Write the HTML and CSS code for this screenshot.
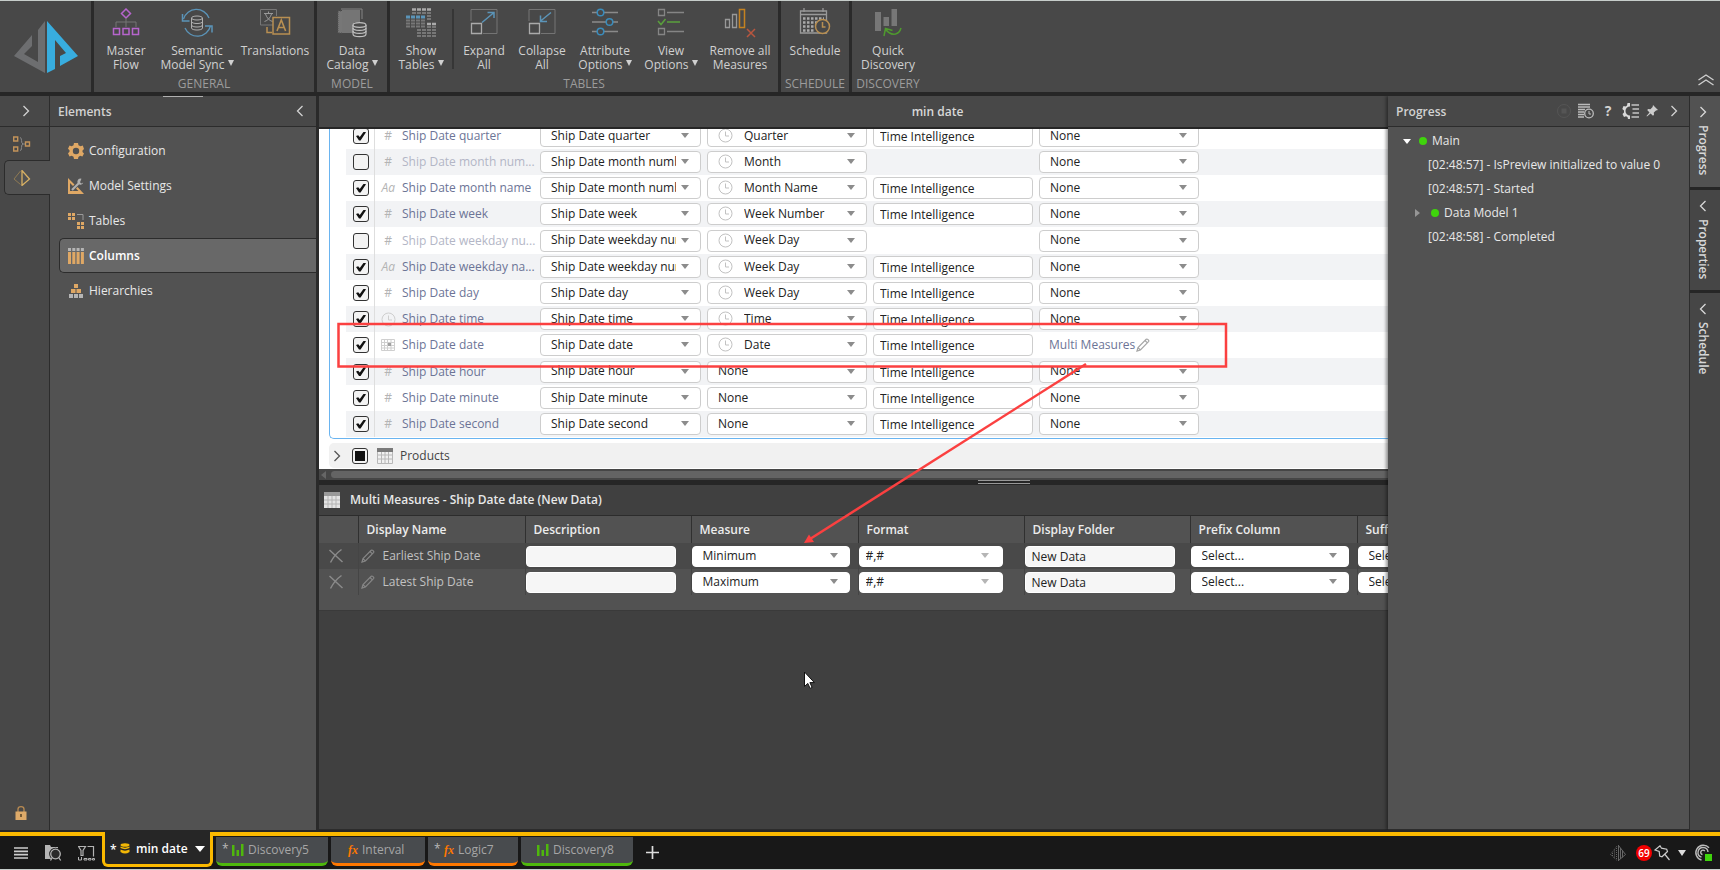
FILE: index.html
```html
<!DOCTYPE html>
<html lang="en">
<head>
<meta charset="utf-8">
<title>min date</title>
<link rel="stylesheet" href="styles.css">
</head>
<body>
<svg class="defs" aria-hidden="true">
  <symbol id="clock" viewBox="0 0 15 15"><circle cx="7.5" cy="7.5" r="6.5" fill="none" stroke="currentColor"/><path d="M7.5 3.5v4.5h3.5" fill="none" stroke="currentColor"/></symbol>
  <symbol id="pencil" viewBox="0 0 14 14"><path d="M1 13l1-3.500L10.200 1.300q.8-.6 1.500.1l.8.8q.6.7 0 1.400L4.400 12zM9 2.500l2.400 2.400M2 9.700l2.300 2.300" fill="none" stroke="currentColor" stroke-width="1.200"/></symbol>
  <symbol id="left" viewBox="0 0 8 12"><path d="M6.500 1L1.500 6l5 5" fill="none" stroke="currentColor" stroke-width="1.300"/></symbol>
  <symbol id="right" viewBox="0 0 8 12"><path d="M1.500 1l5 5-5 5" fill="none" stroke="currentColor" stroke-width="1.300"/></symbol>
  <symbol id="calendar" viewBox="0 0 14 12"><path d="M.5 .5h13v11H.5zM.5 3.500h13M.5 6.500h13M.5 9h13M3.500 .5v11M6.500 .5v11M10 .5v11" fill="none" stroke="currentColor"/><path d="M7 4h3v3H7z" fill="#a0a0a0"/></symbol>
  <symbol id="grid" viewBox="0 0 16 16"><path d="M.5 2h15v13.500H.5zM.5 7h15M.5 11h15M4.500 4v11.500M8 4v11.500M11.500 4v11.500" fill="none" stroke="currentColor"/><path d="M0 0h16v4H0z" fill="#7a7a7a"/></symbol>
  <symbol id="cross" viewBox="0 0 16 16"><path d="M1.500 2l13 12M13.500 1.500q-7 5-11 13" fill="none" stroke="currentColor" stroke-width="1.500"/></symbol>
  <symbol id="bars" viewBox="0 0 12 12"><path d="M0 1h2.500v11H0zM4.500 6H7v6H4.500zM9 0h2.500v12H9z" fill="#4fb80c"/></symbol>
</svg>

<header class="ribbon">
  <div class="logo">
    <svg width="64" height="52" viewBox="0 0 64 52" role="img" aria-label="Pyramid"><path d="M31 0v52L0 35l18-21v11L10 33l14 8V9z" fill="#6d6e70"/><path d="M33 0l31 35-18 10V35l6-3L41 19v29l-8 4z" fill="#38addf"/></svg>
  </div>
  <section class="group general">
    <div class="tools">
      <button class="tool"><svg width="28" height="30" viewBox="0 0 28 30" fill="none"><path d="M14 1l4.500 4.500L14 10 9.500 5.500z" stroke="#b765cd" stroke-width="1.500"/><path d="M14 10v9M4 19v-5h20v5" stroke="#747474"/><path d="M1.500 20.500h6v6h-6zM11 20.500h6v6h-6zM20.500 20.500h6v6h-6z" stroke="#b765cd" stroke-width="1.500"/></svg><span>Master<br>Flow</span></button>
      <button class="tool"><svg width="32" height="30" viewBox="0 0 32 30" fill="none"><path d="M2.500 11A13.500 13.500 0 0 1 28 10M29.500 18A13.500 13.500 0 0 1 4 20" stroke="#5b94b8" stroke-width="1.300"/><path d="M1.500 6v7h7M24 18h7v6.500" stroke="#5b94b8" stroke-width="1.500"/><g stroke="#b0b0b0"><ellipse cx="16" cy="10" rx="5.500" ry="2"/><path d="M10.500 10v10c0 2.700 11 2.700 11 0V10M10.500 13.500c0 2.700 11 2.700 11 0M10.500 17c0 2.700 11 2.700 11 0"/></g></svg><span>Semantic<br>Model Sync <i class="caret"></i></span></button>
      <button class="tool"><svg width="32" height="30" viewBox="0 0 32 30" fill="none"><path d="M14 17H1.500V1.500h16V8" stroke="#777"/><path d="M5 5.500h9M9.500 3.500v2M6.500 6q2 6 7 7.500M12.500 6q-2 6-7 7.500" stroke="#999"/><path d="M14 9.500h16.500v16.500H14zM8 19v5.500h5" stroke="#b88f52" stroke-width="1.500"/><path d="M18 23l4.300-11L26.600 23M19.500 19.500h5.500" stroke="#b88f52" stroke-width="1.600"/></svg><span>Translations</span></button>
    </div>
    <h2>GENERAL</h2>
  </section>
  <section class="group model">
    <div class="tools">
      <button class="tool"><svg width="32" height="30" viewBox="0 0 32 30"><path d="M2 3h5v22H2z" fill="#777" stroke="#555" stroke-dasharray="1 1"/><path d="M6 2h18v12h-6v11H6z" fill="#757575"/><path d="M5 1h21v10" fill="none" stroke="#858585"/><g fill="#4a4a4a" stroke="#c0c0c0" stroke-width="1.200"><path d="M17 17v9c0 3.500 13 3.500 13 0v-9"/><ellipse cx="23.500" cy="17" rx="6.500" ry="2.300"/><path d="M17 20c0 3.200 13 3.200 13 0M17 23c0 3.200 13 3.200 13 0" fill="none"/></g></svg><span>Data<br>Catalog <i class="caret"></i></span></button>
    </div>
    <h2>MODEL</h2>
  </section>
  <section class="group tables">
    <div class="tools">
      <button class="tool"><svg width="32" height="30" viewBox="0 0 32 30" fill="none"><path d="M7 1.500h20" stroke="#aaa" stroke-width="2.500" stroke-dasharray="4 1"/><path d="M7 5h20M22 8h5M22 11h5" stroke="#777" stroke-width="2" stroke-dasharray="4 1"/><path d="M1 9h19" stroke="#5b94b8" stroke-width="3" stroke-dasharray="4 1"/><path d="M1 12.500h19M1 15.500h19M1 18.500h19M12 22h20M12 25h20M12 28h20M22 19h10" stroke="#777" stroke-width="2" stroke-dasharray="4 1"/><path d="M22 16h10" stroke="#aaa" stroke-width="2.500" stroke-dasharray="4 1"/></svg><span>Show<br>Tables <i class="caret"></i></span></button>
      <span class="divider"></span>
      <button class="tool"><svg width="28" height="30" viewBox="0 0 28 30" fill="none"><path d="M1 13V1.500h26v24H13" stroke="#747474"/><path d="M1.500 15.500h10v10h-10z" stroke="#aaa" stroke-width="1.300"/><path d="M12 14.500L24 4.500M17.500 4.500H24V10" stroke="#5b94b8" stroke-width="1.500"/></svg><span>Expand<br>All</span></button>
      <button class="tool"><svg width="28" height="30" viewBox="0 0 28 30" fill="none"><path d="M1 13V1.500h26v24H13" stroke="#747474"/><path d="M1.500 15.500h10v10h-10z" stroke="#aaa" stroke-width="1.300"/><path d="M23 4.500L12 13.500M12.500 7.500v6h6.500" stroke="#5b94b8" stroke-width="1.500"/></svg><span>Collapse<br>All</span></button>
      <button class="tool"><svg width="28" height="30" viewBox="0 0 28 30" fill="#484848"><path d="M1 4.500h26M1 14h26M1 23.500h26" stroke="#8a8a8a" stroke-width="1.300"/><g stroke="#3b8cbb" stroke-width="1.500"><circle cx="9.500" cy="4.500" r="3.300"/><circle cx="18.500" cy="14" r="3.300"/><circle cx="9.500" cy="23.500" r="3.300"/></g></svg><span>Attribute<br>Options <i class="caret"></i></span></button>
      <button class="tool"><svg width="28" height="30" viewBox="0 0 28 30" fill="none"><path d="M1.500 1.500h6v6h-6zM1.500 20.500h6v6h-6zM10 4.500h17M10 23.500h17" stroke="#858585" stroke-width="1.300"/><path d="M1 13l3 3.500L8.500 11M10 14h13" stroke="#5aa03c" stroke-width="1.500"/></svg><span>View<br>Options <i class="caret"></i></span></button>
      <button class="tool"><svg width="32" height="30" viewBox="0 0 32 30" fill="none"><path d="M1.500 11.500h4v8h-4zM8.500 6.500h4v13h-4z" stroke="#999" stroke-width="1.300"/><path d="M15.500 1.500h5v18h-5z" stroke="#c58220" stroke-width="1.500"/><path d="M23 21l8 8M31 21l-8 8" stroke="#b9563f" stroke-width="1.500"/></svg><span>Remove all<br>Measures</span></button>
    </div>
    <h2>TABLES</h2>
  </section>
  <section class="group schedule">
    <div class="tools">
      <button class="tool"><svg width="32" height="30" viewBox="0 0 32 30" fill="none"><path d="M1.500 3h26v22h-26zM5 0v4M24 0v4M1.500 6.500h26" stroke="#999" stroke-width="1.300"/><path d="M4 10.500h21M4 14.500h14M4 18.500h11M4 22.500h11" stroke="#aaa" stroke-width="2.500" stroke-dasharray="2.500 1.500"/><circle cx="23.500" cy="18.500" r="7" fill="#484848" stroke="#b88f52" stroke-width="1.500"/><path d="M23.500 14v5h3" stroke="#b88f52" stroke-width="1.500"/></svg><span>Schedule</span></button>
    </div>
    <h2>SCHEDULE</h2>
  </section>
  <section class="group discovery">
    <div class="tools">
      <button class="tool"><svg width="28" height="30" viewBox="0 0 28 30" fill="none"><path d="M1 4h6v19H1zM9.500 9H15v9H9.500zM17.500 1H23v17h-5.500z" fill="#777"/><path d="M10 28l1.500-7.500 7 2M11.500 21q4 6 10 5 4-.8 5.500-6" stroke="#4f9a2e" stroke-width="1.500"/></svg><span>Quick<br>Discovery</span></button>
    </div>
    <h2>DISCOVERY</h2>
  </section>
  <button class="collapse" aria-label="Collapse ribbon"><svg width="16" height="12" viewBox="0 0 16 12" fill="none" stroke="#d0d0d0" stroke-width="1.300"><path d="M.5 6L8 1l7.500 5M.5 11L8 6l7.500 5"/></svg></button>
</header>

<div class="work">
  <nav class="rail">
    <button class="rail-top" aria-label="Expand"><svg width="8" height="12"><use href="#right"/></svg></button>
    <button class="rail-btn" aria-label="Flow"><svg width="18" height="16" viewBox="0 0 18 16" fill="none"><path d="M.7 1h4v4h-4zM.7 11h4v4h-4zM12.500 6h4v4h-4z" stroke="#c2935a" stroke-width="1.400"/><path d="M7 1.500q1.500 0 1.500 3t1.500 3.500q-1.500 0-1.500 3.500T7 14.500M10 8h2" stroke="#888"/></svg></button>
    <button class="rail-btn on" aria-label="Model"><svg width="18" height="16" viewBox="0 0 18 16" fill="none"><path d="M7.500 1L1 9l6.500 5.500" stroke="#8f7a52"/><path d="M9 .5v15l7.500-6.500z" stroke="#d8b164" stroke-width="1.300"/></svg></button>
    <svg class="lock" width="12" height="14" viewBox="0 0 12 14"><path d="M3 6V3q0-2.300 3-2.300T9 3v3" fill="none" stroke="#b98b52" stroke-width="1.300"/><path d="M.5 5.500h11V14H.5z" fill="#deaa69"/><path d="M5.300 8h1.400v3H5.300z" fill="#4a3a22"/></svg>
  </nav>

  <aside class="elements">
    <span class="grip"></span>
    <header class="panel-head"><h1>Elements</h1><button aria-label="Collapse"><svg width="8" height="12"><use href="#left"/></svg></button></header>
    <ul>
      <li><a href="#configuration"><svg width="16" height="16" viewBox="0 0 16 16"><path d="M6 0h4l.5 2.200 2 1.100 2.300-.8L16 6l-1.500 1.500v1.500L16 10.500l-1.600 3-2.200-.7-1.800 1.100L10 16H6l-.5-2.200-1.800-1-2.200.7L0 10.200l1.500-1.500V7.200L0 5.800l1.500-3.300 2.200.8 1.800-1.100z" fill="#dfa865"/><circle cx="8" cy="8" r="3.200" fill="#505050"/></svg>Configuration</a></li>
      <li><a href="#settings"><svg width="16" height="16" viewBox="0 0 16 16" fill="none"><path d="M0 0l6.500 6.500-1.500 1.500-3-3V13h8.500L8 10.500 9.500 9l6.500 7H0z" fill="#dfa865"/><path d="M4 12l7.500-7.500" stroke="#b0b0b0" stroke-width="2.200"/><path d="M13.500.8a3 3 0 1 0 1.800 3.800l-2 .9-1.300-1.300z" fill="#b0b0b0"/></svg>Model Settings</a></li>
      <li><a href="#tables"><svg width="16" height="16" viewBox="0 0 16 16"><path d="M0 0h3v3H0zM4 0h3v3H4zM0 4h3v3H0zM4 4h3v3H4zM9 9h3v3H9zM13 9h3v3h-3zM9 13h3v3H9zM13 13h3v3h-3z" fill="#dfa865"/><path d="M9 1.500h6V7" fill="none" stroke="#999"/></svg>Tables</a></li>
      <li><a class="on" href="#columns"><svg width="16" height="16" viewBox="0 0 16 16"><path d="M0 0h3v3H0zM4.300 0h3v3h-3zM8.600 0h3v3h-3zM12.900 0h3v3h-3z" fill="#b5b5b5"/><path d="M0 4h3v12H0zM4.300 4h3v12h-3zM8.600 4h3v12h-3zM12.900 4h3v12h-3z" fill="#dfa865"/></svg>Columns</a></li>
      <li><a href="#hierarchies"><svg width="16" height="16" viewBox="0 0 16 16"><path d="M6 1h4v4H6zM3 6h4.500v4H3zM8.500 6H13v4H8.500z" fill="#dfa865"/><path d="M1 11h4v4H1zM6 11h4v4H6zM11 11h4v4h-4z" fill="#b5b5b5"/></svg>Hierarchies</a></li>
    </ul>
  </aside>

  <main class="stage">
    <h1 class="doc-title">min date</h1>
    <div class="upper">
      <div class="view">
        <div class="dates">
          <table class="cols">
            <colgroup><col class="c-check"><col class="c-type"><col class="c-name"><col class="c-sort"><col class="c-field"><col class="c-field"><col class="c-field"><col></colgroup>
            <tbody>
            <tr><td><input type="checkbox" aria-label="Ship Date quarter" checked></td><td>#</td><td>Ship Date quarter</td><td><label class="pick"><select aria-label="Sort"><option>Ship Date quarter</option></select></label></td><td><label class="pick"><svg width="15" height="15"><use href="#clock"/></svg><select aria-label="Category"><option>Quarter</option></select></label></td><td><input type="text" aria-label="Folder" value="Time Intelligence"></td><td><label class="pick"><select aria-label="Measure"><option>None</option></select></label></td><td></td></tr>
            <tr class="off"><td><input type="checkbox" aria-label="Ship Date month number"></td><td>#</td><td>Ship Date month num...</td><td><label class="pick"><select aria-label="Sort"><option>Ship Date month number</option></select></label></td><td><label class="pick"><svg width="15" height="15"><use href="#clock"/></svg><select aria-label="Category"><option>Month</option></select></label></td><td></td><td><label class="pick"><select aria-label="Measure"><option>None</option></select></label></td><td></td></tr>
            <tr><td><input type="checkbox" aria-label="Ship Date month name" checked></td><td><i>Aa</i></td><td>Ship Date month name</td><td><label class="pick"><select aria-label="Sort"><option>Ship Date month number</option></select></label></td><td><label class="pick"><svg width="15" height="15"><use href="#clock"/></svg><select aria-label="Category"><option>Month Name</option></select></label></td><td><input type="text" aria-label="Folder" value="Time Intelligence"></td><td><label class="pick"><select aria-label="Measure"><option>None</option></select></label></td><td></td></tr>
            <tr><td><input type="checkbox" aria-label="Ship Date week" checked></td><td>#</td><td>Ship Date week</td><td><label class="pick"><select aria-label="Sort"><option>Ship Date week</option></select></label></td><td><label class="pick"><svg width="15" height="15"><use href="#clock"/></svg><select aria-label="Category"><option>Week Number</option></select></label></td><td><input type="text" aria-label="Folder" value="Time Intelligence"></td><td><label class="pick"><select aria-label="Measure"><option>None</option></select></label></td><td></td></tr>
            <tr class="off"><td><input type="checkbox" aria-label="Ship Date weekday number"></td><td>#</td><td>Ship Date weekday nu...</td><td><label class="pick"><select aria-label="Sort"><option>Ship Date weekday number</option></select></label></td><td><label class="pick"><svg width="15" height="15"><use href="#clock"/></svg><select aria-label="Category"><option>Week Day</option></select></label></td><td></td><td><label class="pick"><select aria-label="Measure"><option>None</option></select></label></td><td></td></tr>
            <tr><td><input type="checkbox" aria-label="Ship Date weekday name" checked></td><td><i>Aa</i></td><td>Ship Date weekday na...</td><td><label class="pick"><select aria-label="Sort"><option>Ship Date weekday number</option></select></label></td><td><label class="pick"><svg width="15" height="15"><use href="#clock"/></svg><select aria-label="Category"><option>Week Day</option></select></label></td><td><input type="text" aria-label="Folder" value="Time Intelligence"></td><td><label class="pick"><select aria-label="Measure"><option>None</option></select></label></td><td></td></tr>
            <tr><td><input type="checkbox" aria-label="Ship Date day" checked></td><td>#</td><td>Ship Date day</td><td><label class="pick"><select aria-label="Sort"><option>Ship Date day</option></select></label></td><td><label class="pick"><svg width="15" height="15"><use href="#clock"/></svg><select aria-label="Category"><option>Week Day</option></select></label></td><td><input type="text" aria-label="Folder" value="Time Intelligence"></td><td><label class="pick"><select aria-label="Measure"><option>None</option></select></label></td><td></td></tr>
            <tr><td><input type="checkbox" aria-label="Ship Date time" checked></td><td><svg width="15" height="15"><use href="#clock"/></svg></td><td>Ship Date time</td><td><label class="pick"><select aria-label="Sort"><option>Ship Date time</option></select></label></td><td><label class="pick"><svg width="15" height="15"><use href="#clock"/></svg><select aria-label="Category"><option>Time</option></select></label></td><td><input type="text" aria-label="Folder" value="Time Intelligence"></td><td><label class="pick"><select aria-label="Measure"><option>None</option></select></label></td><td></td></tr>
            <tr><td><input type="checkbox" aria-label="Ship Date date" checked></td><td><svg width="14" height="12"><use href="#calendar"/></svg></td><td>Ship Date date</td><td><label class="pick"><select aria-label="Sort"><option>Ship Date date</option></select></label></td><td><label class="pick"><svg width="15" height="15"><use href="#clock"/></svg><select aria-label="Category"><option>Date</option></select></label></td><td><input type="text" aria-label="Folder" value="Time Intelligence"></td><td><a class="multi" href="#multi">Multi Measures<svg width="14" height="14"><use href="#pencil"/></svg></a></td><td></td></tr>
            <tr><td><input type="checkbox" aria-label="Ship Date hour" checked></td><td>#</td><td>Ship Date hour</td><td><label class="pick"><select aria-label="Sort"><option>Ship Date hour</option></select></label></td><td><label class="pick"><select aria-label="Category"><option>None</option></select></label></td><td><input type="text" aria-label="Folder" value="Time Intelligence"></td><td><label class="pick"><select aria-label="Measure"><option>None</option></select></label></td><td></td></tr>
            <tr><td><input type="checkbox" aria-label="Ship Date minute" checked></td><td>#</td><td>Ship Date minute</td><td><label class="pick"><select aria-label="Sort"><option>Ship Date minute</option></select></label></td><td><label class="pick"><select aria-label="Category"><option>None</option></select></label></td><td><input type="text" aria-label="Folder" value="Time Intelligence"></td><td><label class="pick"><select aria-label="Measure"><option>None</option></select></label></td><td></td></tr>
            <tr><td><input type="checkbox" aria-label="Ship Date second" checked></td><td>#</td><td>Ship Date second</td><td><label class="pick"><select aria-label="Sort"><option>Ship Date second</option></select></label></td><td><label class="pick"><select aria-label="Category"><option>None</option></select></label></td><td><input type="text" aria-label="Folder" value="Time Intelligence"></td><td><label class="pick"><select aria-label="Measure"><option>None</option></select></label></td><td></td></tr>
            </tbody>
          </table>
        </div>
        <div class="products"><svg width="8" height="12"><use href="#right"/></svg><input type="checkbox" class="partial" id="products"><svg width="16" height="16"><use href="#grid"/></svg><label for="products">Products</label></div>
      </div>
      <div class="hscroll"><span class="back"></span><span class="thumb"></span></div>
    </div>

    <section class="lower" id="multi">
      <div class="splitter"><span></span></div>
      <h2 class="lower-title"><svg width="16" height="16" viewBox="0 0 16 16"><path d="M0 0h16v16H0z" fill="#e4e4e4"/><path d="M0 0h16v4H0z" fill="#9a9a9a"/><path d="M0 8h16M0 12h16M4 4v12M8 4v12M12 4v12" stroke="#b4b4b4"/></svg>Multi Measures - Ship Date date (New Data)</h2>
      <div class="sheet">
        <table class="measures">
          <colgroup><col class="m-del"><col class="m-a"><col class="m-b"><col class="m-a"><col class="m-b"><col class="m-b"><col class="m-a"><col></colgroup>
          <thead><tr><th></th><th>Display Name</th><th>Description</th><th>Measure</th><th>Format</th><th>Display Folder</th><th>Prefix Column</th><th>Suffix Column</th></tr></thead>
          <tbody>
            <tr><td><button aria-label="Delete"><svg width="16" height="16"><use href="#cross"/></svg></button></td><td><span class="mname"><svg width="14" height="14"><use href="#pencil"/></svg>Earliest Ship Date</span></td><td><input type="text" aria-label="Description"></td><td><label class="pick"><select aria-label="Measure"><option>Minimum</option></select></label></td><td><label class="pick format"><select aria-label="Format"><option>#,#</option></select></label></td><td><input type="text" aria-label="Display Folder" value="New Data"></td><td><label class="pick"><select aria-label="Prefix Column"><option>Select...</option></select></label></td><td><label class="pick"><select aria-label="Suffix Column"><option>Select...</option></select></label></td></tr>
            <tr><td><button aria-label="Delete"><svg width="16" height="16"><use href="#cross"/></svg></button></td><td><span class="mname"><svg width="14" height="14"><use href="#pencil"/></svg>Latest Ship Date</span></td><td><input type="text" aria-label="Description"></td><td><label class="pick"><select aria-label="Measure"><option>Maximum</option></select></label></td><td><label class="pick format"><select aria-label="Format"><option>#,#</option></select></label></td><td><input type="text" aria-label="Display Folder" value="New Data"></td><td><label class="pick"><select aria-label="Prefix Column"><option>Select...</option></select></label></td><td><label class="pick"><select aria-label="Suffix Column"><option>Select...</option></select></label></td></tr>
          </tbody>
        </table>
      </div>
    </section>

    <aside class="progress">
      <header class="panel-head"><h1>Progress</h1>
        <div class="acts">
          <button aria-label="Stop" disabled><svg width="16" height="16" viewBox="0 0 16 16"><circle cx="8" cy="8" r="6.500" fill="none" stroke="#555"/><path d="M5.500 5.500h5v5h-5z" fill="#555"/></svg></button>
          <button aria-label="Log"><svg width="16" height="16" viewBox="0 0 16 16"><path d="M0 1.500h12M0 4h12M0 6.500h7M0 9h6M0 11.500h6M0 14h6" stroke="#bbb" stroke-width="1.500"/><circle cx="11" cy="10.500" r="4.300" fill="#484848" stroke="#bbb" stroke-width="1.300"/><path d="M11 8v3h2" fill="none" stroke="#bbb"/></svg></button>
          <button class="help" aria-label="Help">?</button>
          <button aria-label="Settings"><svg width="17" height="16" viewBox="0 0 17 16"><path d="M8 0v3.500A4.500 4.500 0 0 0 8 12.500V16H6l-.5-2-1.500-.8-2 .8L.5 11 2 9.500v-2L.3 6 1.500 3l2.200.6L5 2.600 5.500 0z" fill="#d8d8d8"/><path d="M9.500 2H17M10.500 6H17M10.500 10H17M9.500 14H17" stroke="#c4c4c4" stroke-width="1.500"/></svg></button>
          <button aria-label="Pin"><svg width="12" height="12" viewBox="0 0 12 12"><path d="M7 0l5 5-2 .4-2.200 2.200.2 2.200-1 1L4.600 8.500 1 11.500l-.5-.5 3-3.600L1.200 5l1-1 2.200.2L6.600 2z" fill="#ccc"/></svg></button>
          <button aria-label="Close"><svg width="8" height="12"><use href="#right"/></svg></button>
        </div>
      </header>
      <ul class="log">
        <li><i class="open"></i><b class="dot"></b>Main</li>
        <li class="msg">[02:48:57] - IsPreview initialized to value 0</li>
        <li class="msg">[02:48:57] - Started</li>
        <li class="child"><i class="closed"></i><b class="dot"></b>Data Model 1</li>
        <li class="msg">[02:48:58] - Completed</li>
      </ul>
    </aside>
  </main>

  <nav class="side">
    <button class="on"><svg width="8" height="12"><use href="#right"/></svg><span>Progress</span></button>
    <button><svg width="8" height="12"><use href="#left"/></svg><span>Properties</span></button>
    <button><svg width="8" height="12"><use href="#left"/></svg><span>Schedule</span></button>
  </nav>
</div>

<footer class="bar">
  <div class="quick">
    <button aria-label="Menu"><svg width="14" height="12" viewBox="0 0 14 12"><path d="M0 1h14M0 4.300h14M0 7.600h14M0 11h14" stroke="#ccc" stroke-width="1.700"/></svg></button>
    <button aria-label="Browse"><svg width="18" height="16" viewBox="0 0 18 16"><path d="M1 0h5l1 2h7v12H1z" fill="#b4b4b4"/><circle cx="11.500" cy="9" r="4.800" fill="#181818" stroke="#181818" stroke-width="3"/><circle cx="11.500" cy="9" r="4.800" fill="#2a2a2a" stroke="#b4b4b4" stroke-width="1.300"/><path d="M8.300 12.500L6.500 15.500M14.700 12.500l2 3" stroke="#b4b4b4" stroke-width="1.300"/></svg></button>
    <button aria-label="Pipeline"><svg width="17" height="16" viewBox="0 0 17 16" fill="none" stroke="#b4b4b4"><path d="M.5 1.500h7L5 5.500v5H3v-5zM9.500 1.500h6v10" stroke-width="1.200"/><path d="M.5 12v3h3v-3M6 13.500h3v1.500H6zM10.500 13.500h2.500v1.500h-2.500zM14.500 13.500h2v1.500h-2z"/></svg></button>
  </div>
  <div class="tabs">
    <a class="tab current" href="#min-date"><sup>*</sup><svg width="10" height="11" viewBox="0 0 10 11" fill="#f2b705"><ellipse cx="5" cy="2" rx="4.500" ry="1.800"/><path d="M.5 3.500q4.500 2.300 9 0V5Q5 7.300.5 5zM.5 6.500q4.500 2.300 9 0V9Q5 12 .5 9z"/></svg><span>min date</span><i class="caret"></i></a>
    <a class="tab t1 green" href="#discovery5"><sup>*</sup><svg width="12" height="12"><use href="#bars"/></svg>Discovery5</a>
    <a class="tab t2 orange" href="#interval"><em>fx</em>Interval</a>
    <a class="tab t3 orange" href="#logic7"><sup>*</sup><em>fx</em>Logic7</a>
    <a class="tab t4 green" href="#discovery8"><svg width="12" height="12"><use href="#bars"/></svg>Discovery8</a>
  </div>
  <button class="add" aria-label="New tab"><svg width="13" height="13" viewBox="0 0 13 13"><path d="M6.500 0v13M0 6.500h13" stroke="#ddd" stroke-width="1.700"/></svg></button>
  <div class="status">
    <svg width="16" height="16" viewBox="0 0 16 16" fill="none" stroke="#666"><path d="M7 1L.5 9.500 7 15.500" stroke-dasharray="1 1"/><path d="M6.500 3v11M4.500 5.500v7M2.500 8v3" stroke-dasharray="1 1"/><path d="M8.500 0v16M10.500 3v11M12.500 5.500v7M8.500 .5l7 9-7 6"/></svg>
    <span class="badge">69</span>
    <svg width="16" height="16" viewBox="0 0 16 16" fill="none" stroke="#ccc" stroke-width="1.200"><path d="M1 5L6 .8l1.500 2.400 5.200 1 .8 2.300-5.500 5.300-2.300-.8-.5-4.500zM11 9.500l4.500 5.500"/></svg>
    <i class="caret"></i>
    <svg width="18" height="18" viewBox="0 0 18 18" fill="none" stroke="#bbb" stroke-width="1.400"><path d="M15 3.800A7.500 7.500 0 1 0 7.500 16"/><path d="M14 8A5 5 0 1 0 7.500 13.200"/><path d="M10.800 7.200A2.200 2.200 0 1 0 8.500 10.500"/><path d="M11 10h7v7h-7z" fill="#3fd40c" stroke="none"/></svg>
  </div>
</footer>

<svg class="notes" width="1720" height="870" viewBox="0 0 1720 870" aria-hidden="true">
  <path d="M338.500 324h887.500v42.500H338.500z" fill="none" stroke="#fb4040" stroke-width="2.500"/>
  <path d="M1086 364L810 539" stroke="#fb4040" stroke-width="2.500"/>
  <path d="M804 543l5-8.500 5 7.500z" fill="#fb4040"/>
  <path d="M804.500 672v14.500l3.300-3.100 2.300 5 2-1-2.200-4.800h4.500z" fill="#fff" stroke="#111" stroke-width="1"/>
</svg>
</body>
</html>
```
FILE: styles.css
```css
* { box-sizing: border-box; }
body {
  margin: 0;
  height: 100vh;
  display: flex;
  flex-direction: column;
  overflow: hidden;
  background: #262626;
  color: #e8e8e8;
  font: 12px/16px "Open Sans", "Noto Sans", sans-serif;
}
button, input, select { font: inherit; color: inherit; }
button { background: none; border: 0; padding: 0; }
h1, h2, ul { margin: 0; padding: 0; font-size: 12px; }
ul { list-style: none; }
a { color: inherit; text-decoration: none; }
svg { flex: none; display: block; }
.defs { position: absolute; width: 0; height: 0; }
.caret {
  display: inline-block;
  border: 3px solid transparent;
  border-top: 6px solid currentColor;
  border-bottom: 0;
  vertical-align: 3px;
}

/* Ribbon */
.ribbon {
  flex: none;
  display: flex;
  height: 96px;
  border-top: 1px solid #c6cdca;
  border-bottom: 4px solid #262626;
  background: #484848;
}
.logo { width: 94px; padding: 20px 0 0 14px; border-right: 3px solid #2a2a2a; }
.group { display: flex; flex-direction: column; border-right: 3px solid #2a2a2a; }
.group h2 { margin: 3px 0 0; text-align: center; font-weight: 400; line-height: 16px; color: #9c9c9c; }
.tools { display: grid; height: 72px; }
.tool {
  display: flex;
  flex-direction: column;
  align-items: center;
  gap: 6px;
  padding-top: 7px;
  line-height: 14px;
  color: #d0d0d0;
  white-space: nowrap;
}
.general .tools { grid-template-columns: 64px 78px 78px; }
.model { width: 73px; }
.tables { width: 391px; }
.tables .tools { grid-template-columns: 62px 2px 60px 56px 70px 62px 76px; }
.schedule { width: 71px; }
.discovery { width: 72px; border: 0; }
.divider { height: 60px; margin-top: 8px; background: #363636; }
.collapse { margin: auto 6px 6px auto; }

/* Work area */
.work { flex: 1; display: flex; min-height: 0; }
.panel-head {
  display: flex;
  align-items: center;
  justify-content: space-between;
  height: 31px;
  border-bottom: 1px solid #2c2c2c;
  background: #484848;
  color: #d2d2d2;
}
.panel-head h1 { font-weight: 600; line-height: 18px; padding-top: 1px; }

.rail { width: 50px; display: flex; flex-direction: column; background: #484848; border-right: 1px solid #2c2c2c; }
.rail-top { height: 31px; border-bottom: 1px solid #2c2c2c; padding-left: 22px; color: #d2d2d2; }
.rail-btn { height: 33px; padding-left: 13px; }
.rail-btn.on {
  height: 35px;
  margin: 0 -1px 0 4px;
  padding-left: 8px;
  padding-right: 20px;
  border: 1px solid #2c2c2c;
  border-right: 0;
  border-radius: 5px 0 0 5px;
  background: #525252;
}
.rail-btn svg { margin: 0; }
.lock { margin: auto 0 10px 15px; }

.elements { position: relative; width: 266px; background: #525252; }
.grip { position: absolute; top: 0; left: 113px; width: 40px; height: 1px; background: #b0b0b0; }
.elements .panel-head { padding: 0 12px 0 8px; }
.elements ul { padding: 6px 0 0 9px; }
.elements li a {
  display: flex;
  align-items: center;
  gap: 5px;
  height: 35px;
  padding-left: 8px;
  border: 1px solid transparent;
  border-right: 0;
  border-radius: 5px 0 0 5px;
}
.elements li a.on { background: #686868; border-color: #2c2c2c; font-weight: 600; color: #fff; }

/* Stage */
.stage {
  position: relative;
  flex: 1;
  min-width: 0;
  display: flex;
  flex-direction: column;
  overflow: hidden;
  border-left: 3px solid #2a2a2a;
}
.doc-title {
  flex: none;
  height: 33px;
  padding-right: 133px;
  border-bottom: 2px solid #262626;
  background: #484848;
  text-align: center;
  font-weight: 600;
  line-height: 31px;
  color: #d8d8d8;
}
.upper { flex: 1 1 2px; min-height: 0; display: flex; flex-direction: column; }
.view {
  flex: 1;
  min-height: 0;
  display: flex;
  flex-direction: column;
  justify-content: flex-end;
  overflow: hidden;
  padding-left: 10px;
  background: #fff;
}
.dates {
  flex: none;
  padding: 0 0 1px 16px;
  border: 1px solid #6ab4f0;
  border-width: 0 0 1px 1px;
  border-radius: 0 0 0 5px;
}
table { border-collapse: collapse; table-layout: fixed; }
th, td { padding: 0; white-space: nowrap; text-align: left; }
.cols { width: 100%; color: #6c7496; }
.cols tr { height: 26px; }
.cols tr:nth-child(5n) { height: 27px; }
.cols tr:nth-child(even) { background: #f2f3f5; }
.c-check { width: 28px; }
.c-type { width: 28px; }
.c-name { width: 138px; }
.c-sort { width: 167px; }
.c-field { width: 166px; }
.cols td:first-child { padding-left: 7px; }
.cols td:nth-child(2) { border-left: 1px solid #dedede; color: #b4b4b4; text-align: center; }
.cols td:nth-child(2) svg { margin: 0 auto; color: #cfcfcf; }
.cols tr.off td:nth-child(3) { color: #b3b6c6; }
.cols td:nth-child(n+4) { padding-right: 6px; color: #222; }
input[type="checkbox"] {
  appearance: none;
  display: grid;
  place-items: center;
  flex: none;
  width: 16px;
  height: 16px;
  margin: 0;
  border: 1px solid #333;
  border-radius: 3px;
  background: #f3f3f3;
}
input[type="checkbox"]:checked::before {
  content: "";
  width: 10px;
  height: 9px;
  background: #111;
  clip-path: polygon(0 50%, 22% 42%, 38% 62%, 78% 0, 100% 8%, 46% 100%, 30% 100%);
}
input.partial::before { content: ""; width: 10px; height: 10px; background: #111; }
.pick {
  display: flex;
  align-items: center;
  height: 22px;
  padding: 0 11px 1px 10px;
  border: 1px solid #cdcdcd;
  border-radius: 4px;
  background: #fff;
  color: #222;
}
.pick > svg { margin-right: 11px; color: #c2c2c2; }
.pick select {
  appearance: none;
  flex: 1;
  min-width: 0;
  margin: 0 5px 0 0;
  padding: 0;
  border: 0;
  background: none;
}
.pick::after {
  content: "";
  border: 4px solid transparent;
  border-top: 5px solid #8c8c8c;
  border-bottom: 0;
}
input[type="text"] {
  display: block;
  width: 100%;
  height: 22px;
  margin: 0;
  padding: 1px 6px 0;
  border: 1px solid #cdcdcd;
  border-radius: 4px;
  background: #fff;
  color: #222;
}
.multi { display: flex; align-items: center; gap: 1px; padding-left: 10px; color: #6c7496; }
.multi svg { color: #a6a6a6; }
.products {
  flex: none;
  display: flex;
  align-items: center;
  height: 25px;
  margin: 4px 0 1px;
  padding-left: 4px;
  border-radius: 5px 0 0 5px;
  background: #f1f1f1;
  color: #555;
}
.products input { margin: 0 9px 0 11px; }
.products label { margin-left: 7px; color: #444; }
.products svg:nth-of-type(2) { color: #b8b8b8; }
.hscroll { flex: none; display: flex; align-items: center; gap: 5px; height: 11px; padding-left: 2px; background: #464646; }
.hscroll .back { border: 4px solid transparent; border-right: 5px solid #666; border-left: 0; }
.hscroll .thumb { flex: 1; height: 7px; border-radius: 4px; background: #646464; }

.lower { flex: 1 1 0; min-height: 0; background: #404040; border-bottom: 1px solid #2c2c2c; }
.splitter { height: 5px; background: #262626; display: flex; justify-content: center; }
.splitter span { width: 52px; height: 4px; border: 1px solid #989898; border-width: 1px 0; }
.lower-title {
  display: flex;
  align-items: center;
  gap: 10px;
  height: 31px;
  padding-left: 5px;
  border-bottom: 1px solid #2c2c2c;
  font-size: 12px;
  font-weight: 600;
}
.sheet { height: 95px; background: #525252; border-bottom: 1px solid #3a3a3a; }
.measures { width: 100%; color: #c2c2c2; }
.m-del { width: 39px; }
.m-a { width: 167px; }
.m-b { width: 166px; }
.measures th { height: 27px; padding-left: 8px; border-left: 1px solid #303030; font-weight: 600; color: #ececec; }
.measures td { height: 26px; border-left: 1px solid #454545; }
.measures th:first-child, .measures td:first-child { border-left: 0; }
.measures tbody tr:first-child { background: #494949; }
.measures td:first-child button { margin-left: 9px; color: #8a8a8a; display: block; }
.mname { display: flex; align-items: center; gap: 8px; padding-left: 2px; }
.mname svg { color: #868686; }
.measures .pick { width: 158px; height: 21px; border-color: #fff; }
.measures .pick.format { width: 144px; padding-left: 6px; }
.measures .format::after { border-top-color: #b5b5b5; margin-right: 2px; }
.measures input { width: 150px; height: 21px; border-color: #fff; background: #f6f6f6; }

/* Progress */
.progress {
  position: absolute;
  inset: 0 0 0 auto;
  width: 301px;
  background: #525252;
  border-bottom: 1px solid #2c2c2c;
  box-shadow: -2px 0 3px rgba(0, 0, 0, .4);
}
.progress .panel-head { padding: 0 4px 0 8px; }
.acts { display: grid; grid-template-columns: repeat(6, 22px); justify-items: center; align-items: center; }
.help { font-weight: 700; font-size: 14px; }
.log { padding: 2px 0 0 15px; }
.log li { display: flex; align-items: center; height: 24px; }
.log .msg { padding-left: 25px; }
.log .child { padding-left: 12px; }
.log i { border: 4px solid transparent; }
.log .open { border-top: 5px solid #fff; border-bottom: 0; margin-right: 8px; }
.log .closed { border-left: 5px solid #969696; border-right: 0; margin-right: 11px; }
.dot { width: 8px; height: 8px; margin-right: 5px; border-radius: 50%; background: #3fd40c; }

.side { width: 31px; display: flex; flex-direction: column; gap: 3px; border-left: 1px solid #2c2c2c; background: #262626; }
.side button {
  display: flex;
  flex-direction: column;
  align-items: center;
  gap: 7px;
  height: 100px;
  padding: 10px 4px 0 0;
  background: #464646;
  color: #d8d8d8;
}
.side button.on { height: 91px; background: #525252; }
.side button:last-child { flex: 1; }
.side span { writing-mode: vertical-rl; font-weight: 600; }

/* Bottom bar */
.bar {
  flex: none;
  display: flex;
  height: 40px;
  border-top: 2px solid #262626;
  border-bottom: 1px solid #c6cdca;
  background: linear-gradient(#fbb900 4px, #181818 4px);
}
.quick { display: flex; align-items: center; gap: 16px; width: 102px; padding: 4px 0 0 14px; }
.tabs { display: flex; gap: 3px; }
.tab {
  display: flex;
  align-items: center;
  gap: 4px;
  height: 29px;
  margin-top: 5px;
  border-bottom: 3px solid #4fb80c;
  border-radius: 0 0 6px 6px;
  background: #484b4e;
  color: #a6a6a6;
  white-space: nowrap;
}
.tab sup { width: 6px; font-size: 12px; line-height: 12px; vertical-align: 0; align-self: flex-start; padding-top: 6px; color: #b8b8b8; }
.tab em { font: italic 700 12px/16px "Liberation Serif", serif; color: #ff7800; }
.tab.orange { border-color: #ff7800; }
.tab.current {
  height: 35px;
  width: 111px;
  margin-top: 0;
  padding: 1px 5px 0;
  border: 3px solid #fbb900;
  border-top: 0;
  background: #262626;
  color: #fff;
  font-weight: 600;
}
.tab.current sup { padding-top: 11px; color: #fff; }
.tab.current span { margin-left: 2px; }
.tab.current .caret { margin-left: auto; border-width: 6px 5px 0; }
.t1 { width: 112px; padding-left: 6px; }
.t2 { width: 94px; padding-left: 17px; }
.t3 { width: 90px; padding-left: 6px; }
.t4 { width: 112px; padding-left: 16px; }
.add { margin: 4px 0 0 13px; }
.status { display: flex; align-items: center; gap: 2px; margin-left: auto; padding: 4px 8px 0 0; }
.status .caret { margin: 0 6px 0 6px; border-width: 6px 4px 0; color: #ddd; }
.badge {
  width: 16px;
  height: 16px;
  margin-left: 8px;
  border-radius: 50%;
  background: #f20000;
  color: #fff;
  font-size: 10px;
  font-weight: 600;
  text-align: center;
}

/* Callout drawn over the page */
.notes { position: absolute; inset: 0 auto auto 0; pointer-events: none; }
```
